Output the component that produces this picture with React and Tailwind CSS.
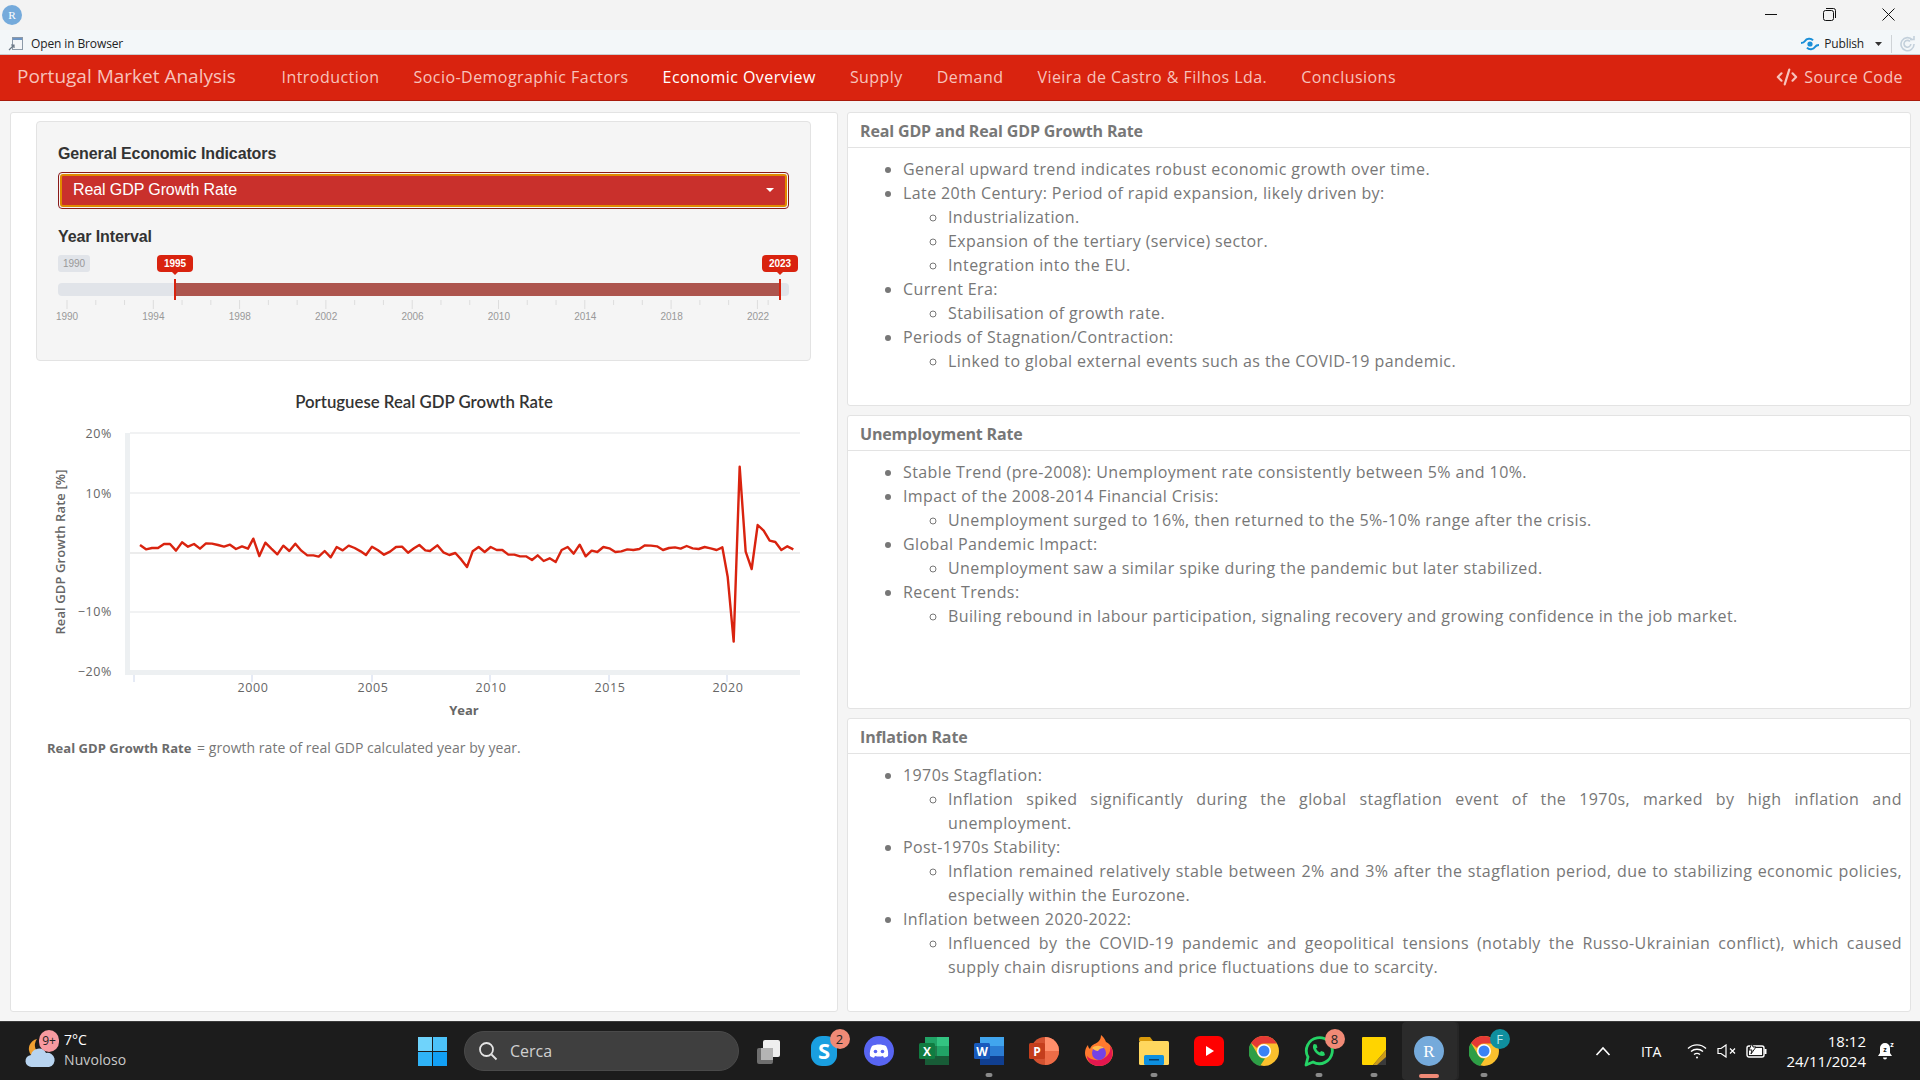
import { Code2 } from "lucide-react";

const openSans = "font-['Open_Sans',sans-serif]";
const arial = "font-['Liberation_Sans',Arial,sans-serif]";

const navLinks = [
  "Introduction",
  "Socio-Demographic Factors",
  "Economic Overview",
  "Supply",
  "Demand",
  "Vieira de Castro & Filhos Lda.",
  "Conclusions",
];

const cards = [
  {
    title: "Real GDP and Real GDP Growth Rate",
    items: [
      { text: "General upward trend indicates robust economic growth over time." },
      {
        text: "Late 20th Century: Period of rapid expansion, likely driven by:",
        sub: ["Industrialization.", "Expansion of the tertiary (service) sector.", "Integration into the EU."],
      },
      { text: "Current Era:", sub: ["Stabilisation of growth rate."] },
      {
        text: "Periods of Stagnation/Contraction:",
        sub: ["Linked to global external events such as the COVID-19 pandemic."],
      },
    ],
  },
  {
    title: "Unemployment Rate",
    items: [
      { text: "Stable Trend (pre-2008): Unemployment rate consistently between 5% and 10%." },
      {
        text: "Impact of the 2008-2014 Financial Crisis:",
        sub: ["Unemployment surged to 16%, then returned to the 5%-10% range after the crisis."],
      },
      {
        text: "Global Pandemic Impact:",
        sub: ["Unemployment saw a similar spike during the pandemic but later stabilized."],
      },
      {
        text: "Recent Trends:",
        sub: ["Builing rebound in labour participation, signaling recovery and growing confidence in the job market."],
      },
    ],
  },
  {
    title: "Inflation Rate",
    items: [
      {
        text: "1970s Stagflation:",
        sub: ["Inflation spiked significantly during the global stagflation event of the 1970s, marked by high inflation and unemployment."],
      },
      {
        text: "Post-1970s Stability:",
        sub: ["Inflation remained relatively stable between 2% and 3% after the stagflation period, due to stabilizing economic policies, especially within the Eurozone."],
      },
      {
        text: "Inflation between 2020-2022:",
        sub: ["Influenced by the COVID-19 pandemic and geopolitical tensions (notably the Russo-Ukrainian conflict), which caused supply chain disruptions and price fluctuations due to scarcity."],
      },
    ],
  },
];

// traced from the chart, in page pixels / 3
const lineA = [[330,495],[348,508],[366,504],[384,504],[402,492],[420,492],[438,512],[456,487],[474,500],[492,492],[510,506],[528,490],[546,491],[564,495],[582,500],[600,494],[618,507],[636,499],[654,506],[670,476],[688,528],[706,488],[724,506],[742,523],[760,497],[778,513],[796,491],[814,512],[832,526],[850,526],[866,530],[884,513],[902,532],[920,501],[938,511],[956,497],[974,504],[992,514],[1008,525],[1026,500],[1044,511],[1062,524],[1080,515],[1098,501],[1116,500],[1134,518],[1152,505],[1168,495],[1186,511]];
const lineB = [[0,393],[22,376],[40,397],[58,405],[76,399],[94,419],[111,441],[128,394],[146,381],[164,396],[182,381],[200,390],[217,390],[235,404],[253,404],[270,409],[288,409],[306,420],[323,406],[341,423],[359,415],[377,426],[395,390],[413,381],[431,401],[449,374],[467,409],[485,392],[502,396],[520,381],[538,385],[556,396],[574,394],[592,388],[610,390],[628,387],[645,376],[663,377],[681,379],[699,390],[717,384],[735,382],[752,386],[770,378],[788,385],[806,387],[824,381],[842,385],[860,390],[877,382],[893,470],[911,665],[929,140],[947,395],[965,447],[983,315],[1001,332],[1019,362],[1036,366],[1054,390],[1072,379],[1090,388]];
const linePoints = [
  ...lineA.map(([x, y]) => `${30 + x / 3},${380 + y / 3}`),
  ...lineB.map(([x, y]) => `${430 + x / 3},${420 + y / 3}`),
].join(" ");

function Card({ title, items, className }) {
  return (
    <section className={`bg-white border border-[#e3e3e3] rounded-[3px] overflow-hidden ${className}`}>
      <h3 className="h-[35px] pl-[12px] border-b border-[#e3e3e3] text-[16px] leading-[36px] tracking-[-0.15px] font-bold text-[#777777]">
        {title}
      </h3>
      <ul className="list-disc pl-[55px] pr-[8px] pt-[9px] text-[16px] leading-[24px] tracking-[0.395px] text-[#777777] marker:text-[#777777]">
        {items.map((item) => (
          <li key={item.text}>
            {item.text}
            {item.sub && (
              <ul className="list-[circle] pl-[45px] text-justify">
                {item.sub.map((s) => (
                  <li key={s}>{s}</li>
                ))}
              </ul>
            )}
          </li>
        ))}
      </ul>
    </section>
  );
}

function SliderBadge({ className, children }) {
  return (
    <span className={`absolute top-0 h-[17px] w-[36px] rounded-[4px] bg-[#d9230f] text-center text-[10px] font-bold leading-[17px] text-white ${className}`}>
      {children}
      <span className="absolute left-1/2 top-[17px] -translate-x-1/2 w-0 h-0 border-x-[3px] border-x-transparent border-t-[3px] border-t-[#d9230f]" />
    </span>
  );
}

function YearSlider() {
  const years = [1990, 1994, 1998, 2002, 2006, 2010, 2014, 2018, 2022];
  return (
    <div className={`relative h-[78px] ${arial}`}>
      <span className="absolute left-0 top-0 h-[17px] w-[32px] rounded-[3px] bg-[#e1e4e9] text-center text-[10px] leading-[17px] text-[#999999]">
        1990
      </span>
      <SliderBadge className="left-[99px]">1995</SliderBadge>
      <SliderBadge className="left-[704px]">2023</SliderBadge>
      <div className="absolute left-0 top-[28px] h-[13px] w-[731px] rounded-[4px] bg-[#e1e4e9]" />
      <div className="absolute left-[117px] top-[28px] h-[13px] w-[605px] bg-[#ad554e]" />
      <div className="absolute left-[116px] top-[24px] h-[21px] w-[2px] bg-[#d9230f]" />
      <div className="absolute left-[721px] top-[24px] h-[21px] w-[2px] bg-[#d9230f]" />
      <svg className="absolute left-0 top-[45px]" width="731" height="10">
        {years.flatMap((y, i) => [0, 1, 2].map((k) => {
          const x = 9 + i * 86.3 + k * 28.77;
          if (i === 8 && k > 0) return <line key={`${y}${k}`} x1={x - 20 + k * 2} x2={x - 20 + k * 2} y1="0" y2="5" stroke="#dddddd" />;
          return <line key={`${y}${k}`} x1={x} x2={x} y1="0" y2={k === 0 ? 9 : 5} stroke="#dddddd" />;
        }))}
      </svg>
      <div className="absolute left-[-6px] top-[56px] flex w-[721px] justify-between text-[10px] leading-[12px] text-[#999999]">
        {years.map((y) => (
          <span key={y} className="w-[30px] text-center">{y}</span>
        ))}
      </div>
    </div>
  );
}

function Chart() {
  const grid = [433, 493, 612];
  const yLabels = [[20, 438], [10, 498], [-10, 616], [-20, 676]];
  const xTicks = [[2000, 252], [2005, 372], [2010, 490], [2015, 609], [2020, 727]];
  return (
    <svg className={`block ${openSans}`} width="780" height="340" viewBox="36 385 780 340">
      <text x="424" y="408" textAnchor="middle" fontSize="16.8" fontWeight="600" fill="#333333" className="font-['Lato',sans-serif]">
        Portuguese Real GDP Growth Rate
      </text>
      {grid.map((y) => (
        <line key={y} x1="130" x2="800" y1={y} y2={y} stroke="#eceeef" strokeWidth="1.5" />
      ))}
      <line x1="130" x2="800" y1="553" y2="553" stroke="#e6e6e6" strokeWidth="1.5" />
      <rect x="125" y="433" width="5" height="242" fill="#edf0f2" />
      <rect x="125" y="670" width="675" height="5" fill="#edf0f2" />
      {[134, 252, 372, 490, 609, 727].map((x) => (
        <line key={x} x1={x} x2={x} y1="675" y2="682" stroke="#ccd6eb" />
      ))}
      {yLabels.map(([v, y]) => (
        <text key={v} x="112" y={y} textAnchor="end" fontSize="12.5" letterSpacing="0.6" fill="#666666">
          {v < 0 ? `−${-v}%` : `${v}%`}
        </text>
      ))}
      {xTicks.map(([v, x]) => (
        <text key={v} x={x + 1} y="692" textAnchor="middle" fontSize="12.5" letterSpacing="0.6" fill="#666666">
          {v}
        </text>
      ))}
      <text x="464" y="715" textAnchor="middle" fontSize="13" fontWeight="700" fill="#666666">Year</text>
      <text transform="translate(65 552) rotate(-90)" textAnchor="middle" fontSize="13" fontWeight="600" letterSpacing="0.1" fill="#666666">
        Real GDP Growth Rate [%]
      </text>
      <polyline points={linePoints} fill="none" stroke="#d9230f" strokeWidth="2.4" strokeLinejoin="round" />
    </svg>
  );
}

function RLogo({ size = 20 }) {
  return (
    <svg width={size} height={size} viewBox="0 0 30 30">
      <circle cx="15" cy="15" r="15" fill="#75aadb" />
      <text x="15" y="21" textAnchor="middle" fontSize="17" fill="#ffffff" fontFamily="Liberation Serif, serif">R</text>
    </svg>
  );
}

function TitleBar() {
  return (
    <div className="h-[30px] bg-[#f3f3f3] flex items-center justify-between pl-[2px]">
      <RLogo />
      <div className="flex items-center pb-[2px]">
        <div className="w-[58px] flex justify-center">
          <svg width="12" height="12" viewBox="0 0 12 12"><path d="M0 6.5h12" stroke="#111" /></svg>
        </div>
        <div className="w-[58px] flex justify-center">
          <svg width="13" height="13" viewBox="0 0 13 13" fill="none" stroke="#111">
            <rect x="0.5" y="2.5" width="10" height="10" rx="2" />
            <path d="M3 .5h7.5a2 2 0 0 1 2 2V10" />
          </svg>
        </div>
        <div className="w-[62px] flex justify-center pr-[2px]">
          <svg width="13" height="13" viewBox="0 0 13 13" stroke="#111"><path d="M.5.5l12 12M12.5.5l-12 12" /></svg>
        </div>
      </div>
    </div>
  );
}

function ToolBar() {
  return (
    <div className={`h-[25px] pt-[3px] bg-[#f3f7f9] border-b border-[#c9cccf] flex items-center justify-between pl-[8px] pr-[4px] text-[12px] text-[#222222] ${openSans}`}>
      <div className="flex items-center gap-[7px]">
        <svg width="16" height="16" viewBox="0 0 16 16">
          <rect x="4.5" y="1.5" width="10" height="12" fill="#f4f6f8" stroke="#8d9aa8" />
          <path d="M5 2h9v2H5z" fill="#6d95c4" />
          <path d="M1 14l5-5M3 9h3v3" fill="none" stroke="#6a7785" strokeWidth="1.2" />
        </svg>
        <span className="tracking-[-0.12px]">Open in Browser</span>
      </div>
      <div className="flex items-center">
        <svg width="20" height="16" viewBox="0 0 20 16" fill="none">
          <circle cx="10" cy="8" r="2.6" fill="#1a8fd8" />
          <path d="M1 7c2 0 3-.3 4-2 1.5-2.6 6-3 8 -.6 M19 9c-2 0-3 .3-4 2-1.5 2.6-6 3-8 .6" stroke="#1a8fd8" strokeWidth="2" />
        </svg>
        <span className="ml-[4px] tracking-[-0.2px]">Publish</span>
        <svg className="ml-[11px]" width="7" height="4" viewBox="0 0 7 4"><path d="M0 0h7L3.5 4z" fill="#333" /></svg>
        <div className="ml-[9px] h-[18px] w-px bg-[#cfd3d6]" />
        <svg className="ml-[7px]" width="17" height="17" viewBox="0 0 17 17" fill="none" stroke="#c3d0db" strokeWidth="1.6">
          <path d="M13.5 5a6.5 6.5 0 1 0 1.5 4" />
          <path d="M11 4.5h4v-3.5" />
          <path d="M11 6.6a3.4 3.4 0 1 0 .8 2.4" />
        </svg>
      </div>
    </div>
  );
}

function Navbar() {
  return (
    <nav className={`h-[46px] pb-[2px] bg-[#d9230f] border-b border-[#a91b0c] flex items-center justify-between pl-[17px] pr-[17px] text-[16px] tracking-[0.45px] text-[#f7c2bb] ${openSans}`}>
      <div className="flex items-center">
        <span className="text-[19px] tracking-normal w-[247.5px]">Portugal Market Analysis</span>
        {navLinks.map((l) => (
          <a key={l} className={`px-[17px] ${l === "Economic Overview" ? "text-white" : ""}`}>{l}</a>
        ))}
      </div>
      <div className="flex items-center gap-[6px]">
        <Code2 size={22} strokeWidth={2.4} />
        <span className="tracking-[0.42px]">Source Code</span>
      </div>
    </nav>
  );
}

function LeftPanel() {
  return (
    <div className="w-[828px] bg-white border border-[#e3e3e3] rounded-[3px] pl-[25px] pt-[8px]">
      <div className={`w-[775px] h-[240px] bg-[#f5f5f5] border border-[#e3e3e3] rounded-[4px] pl-[21px] pt-[22px] ${arial}`}>
        <label className="block text-[16px] leading-[20px] tracking-[-0.12px] font-bold text-[#333333]">General Economic Indicators</label>
        <div className="mt-[8px] w-[731px] h-[37px] rounded-[4px] border border-[#8a1a1a] p-px">
          <div className="h-full rounded-[3px] border-2 border-[#e08a00] bg-[#c9302c] flex items-center justify-between pl-[11px] pr-[11px] pb-[2px] text-[16px] tracking-[-0.1px] text-white">
            <span>Real GDP Growth Rate</span>
            <span className="w-0 h-0 border-x-[4px] border-x-transparent border-t-[4px] border-t-white" />
          </div>
        </div>
        <label className="block mt-[18px] text-[16px] leading-[20px] tracking-[-0.1px] font-bold text-[#333333]">Year Interval</label>
        <div className="mt-[8px]">
          <YearSlider />
        </div>
      </div>
      <div className="mt-[24px]">
        <Chart />
      </div>
      <p className={`mt-[11px] pl-[11px] text-[14px] leading-[24px] tracking-[0.03px] text-[#777777] ${openSans}`}>
        <b className="mr-[2px] text-[13px] font-bold text-[#6b6b6b]">Real GDP Growth Rate</b> = growth rate of real GDP calculated year by year.
      </p>
    </div>
  );
}

function Dot({ active }) {
  return active ? (
    <span className="absolute left-1/2 -translate-x-1/2 bottom-[2px] h-[4px] w-[20px] rounded bg-[#f08a76]" />
  ) : (
    <span className="absolute left-1/2 -translate-x-1/2 bottom-[3px] h-[4px] w-[7px] rounded bg-[#8a8a8a]" />
  );
}

function Badge({ children, color = "bg-[#f08a76]", textColor = "text-[#222222]" }) {
  return (
    <span className={`absolute right-[2px] top-[7px] w-[20px] h-[20px] rounded-full ${color} ${textColor} text-center text-[13px] leading-[20px] ${openSans}`}>
      {children}
    </span>
  );
}

const taskIcons = [
  {
    id: "task",
    svg: (
      <svg width="28" height="28" viewBox="0 0 28 28">
        <rect x="2" y="11" width="16" height="16" rx="2" fill="#6e6e6e" />
        <rect x="8" y="3" width="17" height="17" rx="2" fill="#efefef" />
        <rect x="6" y="11" width="12" height="12" fill="#b4b4b4" />
      </svg>
    ),
  },
  {
    id: "skype",
    badge: "2",
    svg: (
      <svg width="30" height="34" viewBox="0 0 30 34">
        <rect x="2" y="2" width="26" height="30" rx="11" fill="#1a9fe0" />
        <text x="15" y="25" textAnchor="middle" fontSize="22" fontWeight="700" fill="#fff" fontFamily="Open Sans, sans-serif">S</text>
      </svg>
    ),
  },
  {
    id: "discord",
    svg: (
      <svg width="30" height="30" viewBox="0 0 30 30">
        <circle cx="15" cy="15" r="15" fill="#5865f2" />
        <path d="M8 10c4-2 10-2 14 0 2 3 2.500 7 2 10-1.500 1-3 1.600-4 1.800l-1-1.800c-3 .8-5 .8-8 0l-1 1.800c-1-.2-2.500-.8-4-1.800-.5-3 0-7 2-10z" fill="#fff" />
        <circle cx="11.500" cy="15.500" r="1.800" fill="#5865f2" />
        <circle cx="18.500" cy="15.500" r="1.800" fill="#5865f2" />
      </svg>
    ),
  },
  {
    id: "excel",
    svg: (
      <svg width="30" height="28" viewBox="0 0 30 28">
        <rect x="6" y="0" width="24" height="28" rx="2" fill="#1f7a4a" />
        <rect x="18" y="0" width="12" height="9" fill="#33c481" />
        <rect x="18" y="9" width="12" height="10" fill="#21a366" />
        <rect x="6" y="0" width="12" height="9" fill="#21a366" />
        <rect x="6" y="19" width="24" height="9" fill="#185c37" />
        <rect x="0" y="6" width="16" height="16" rx="1.500" fill="#107c41" />
        <text x="8" y="19" textAnchor="middle" fontSize="12" fontWeight="700" fill="#fff" fontFamily="Open Sans, sans-serif">X</text>
      </svg>
    ),
  },
  {
    id: "word",
    dot: true,
    svg: (
      <svg width="30" height="28" viewBox="0 0 30 28">
        <rect x="6" y="0" width="24" height="28" rx="2" fill="#2b7cd3" />
        <rect x="6" y="0" width="24" height="9" fill="#41a5ee" />
        <rect x="6" y="19" width="24" height="9" fill="#103f91" />
        <rect x="0" y="6" width="16" height="16" rx="1.500" fill="#185abd" />
        <text x="8" y="19" textAnchor="middle" fontSize="12" fontWeight="700" fill="#fff" fontFamily="Open Sans, sans-serif">W</text>
      </svg>
    ),
  },
  {
    id: "ppt",
    svg: (
      <svg width="30" height="30" viewBox="0 0 30 30">
        <circle cx="16" cy="15" r="14" fill="#d35230" />
        <path d="M16 1a14 14 0 0 1 14 14H16z" fill="#ff8f6b" />
        <path d="M16 15h14a14 14 0 0 1-14 14z" fill="#ed6c47" />
        <rect x="0" y="7" width="16" height="16" rx="1.500" fill="#c43e1c" />
        <text x="8" y="20" textAnchor="middle" fontSize="12" fontWeight="700" fill="#fff" fontFamily="Open Sans, sans-serif">P</text>
      </svg>
    ),
  },
  {
    id: "firefox",
    svg: (
      <svg width="30" height="32" viewBox="0 0 30 32">
        <path d="M15 31C6 31 1 24 1 18c0-3 1-6 3-8 0 2 1 3 2 4 1-4 5-5 8-7 2-2 3-4 3-7 3 2 4 5 5 7 4 2 7 6 7 11 0 7-6 13-14 13z" fill="#ff7a2f" />
        <path d="M15 31C8 31 3 26 3 21c4 5 14 6 20 0 3-3 4-7 3-10 3 3 3 8 2 11-2 6-7 9-13 9z" fill="#e3174f" />
        <circle cx="15" cy="18" r="7" fill="#7542e5" />
        <path d="M8 13c3-3 9-3 12 0-3 0-5 1-6 3-2 0-4-1-6-3z" fill="#ffbd4f" />
      </svg>
    ),
  },
  {
    id: "files",
    dot: true,
    svg: (
      <svg width="30" height="28" viewBox="0 0 30 28">
        <path d="M0 2a2 2 0 0 1 2-2h9l3 4H0z" fill="#d99a0b" />
        <rect x="0" y="4" width="30" height="24" rx="1.500" fill="#ffd75e" />
        <rect x="5" y="18" width="20" height="10" rx="1.500" fill="#0d8fe0" />
        <rect x="10" y="22" width="10" height="1.500" fill="#063f6b" />
      </svg>
    ),
  },
  {
    id: "yt",
    svg: (
      <svg width="30" height="30" viewBox="0 0 30 30">
        <rect x="0" y="0" width="30" height="30" rx="6" fill="#f00" />
        <path d="M12 10l8 5-8 5z" fill="#fff" />
      </svg>
    ),
  },
  { id: "chrome", svg: <Chrome /> },
  {
    id: "wa",
    dot: true,
    badge: "8",
    svg: (
      <svg width="30" height="32" viewBox="0 0 30 32" fill="none">
        <path d="M2 30l2-8A13 13 0 1 1 9 27z" stroke="#25d366" strokeWidth="2.800" strokeLinejoin="round" />
        <path d="M10 9c-2 2-1 6 2 9s7 4 9 2l-1-3-3-1-1 1.500c-2-1-3-2-4-4l1.500-1-1-3z" fill="#25d366" />
      </svg>
    ),
  },
  {
    id: "notes",
    dot: true,
    svg: (
      <svg width="26" height="30" viewBox="0 0 26 30">
        <path d="M1 2a1 1 0 0 1 1-1h22a1 1 0 0 1 1 1v18l-9 9H2a1 1 0 0 1-1-1z" fill="#ffd400" />
        <path d="M25 14v15H12z" fill="#3a3a3a" />
        <path d="M25 14v7l-9 8h-4z" fill="#c99a1c" />
      </svg>
    ),
  },
  { id: "r", active: true, svg: <RLogo size={30} /> },
  {
    id: "chrome2",
    dot: true,
    badge: "F",
    badgeColor: "bg-[#0f8f9e]",
    badgeText: "text-[#bfe6ea]",
    svg: <Chrome />,
  },
];

function Chrome() {
  return (
    <svg width="30" height="30" viewBox="0 0 30 30">
      <circle cx="15" cy="15" r="15" fill="#fbc02d" />
      <path d="M15 0a15 15 0 0 1 13 7.500H15a7.500 7.500 0 0 0-7 4.500L2 7A15 15 0 0 1 15 0z" fill="#e53935" />
      <path d="M2 7l6.500 11a7.500 7.500 0 0 0 7.500 4.500L11 30A15 15 0 0 1 2 7z" fill="#2e9e46" />
      <circle cx="15" cy="15" r="7" fill="#fff" />
      <circle cx="15" cy="15" r="5.500" fill="#3b82f6" />
    </svg>
  );
}

function Taskbar() {
  return (
    <footer className={`h-[59px] bg-[#1c1c1c] border-t border-[#3a3a3a] flex items-center text-white ${openSans}`}>
      <div className="w-[418px] pl-[25px] flex items-center shrink-0">
        <div className="relative w-[39px] h-[44px]">
          <svg className="absolute left-0 top-[8px]" width="32" height="32" viewBox="0 0 32 32">
            <path d="M12 2a10 10 0 0 0 6 16H6A10 10 0 0 1 12 2z" fill="#f0a030" />
            <path d="M7 30a6 6 0 0 1-1-12 8 8 0 0 1 15-2 7 7 0 0 1 3 14z" fill="#b8d4f0" />
          </svg>
          <span className="absolute left-[14px] top-[1px] w-[20px] h-[22px] rounded-full bg-[#f79aa0] text-center text-[12px] leading-[22px] text-[#222222]">9+</span>
        </div>
        <div className="leading-[20px] text-[14px] pb-[2px]">
          <div>7°C</div>
          <div className="text-[#c9c9c9] tracking-[0.1px]">Nuvoloso</div>
        </div>
      </div>
      <div className="w-[46px] shrink-0">
        <svg width="29" height="29" viewBox="0 0 29 29">
          <rect x="0" y="0" width="14" height="14" fill="#6fd3fb" />
          <rect x="15" y="0" width="14" height="14" fill="#4cc2f9" />
          <rect x="0" y="15" width="14" height="14" fill="#2fb3f7" />
          <rect x="15" y="15" width="14" height="14" fill="#12a0f5" />
        </svg>
      </div>
      <div className="w-[275px] h-[40px] rounded-full bg-[#3f3f3f] border border-[#4a4a4a] flex items-center pl-[13px] gap-[12px] shrink-0 text-[16px] text-[#d0d0d0]">
        <svg width="20" height="20" viewBox="0 0 20 20" fill="none" stroke="#e4e4e4" strokeWidth="1.800">
          <circle cx="8.500" cy="8.500" r="6.500" />
          <path d="M13.500 13.500l5 5" />
        </svg>
        <span>Cerca</span>
      </div>
      <div className="flex ml-[2.500px] h-full">
        {taskIcons.map((t) => (
          <div key={t.id} className={`relative w-[55px] h-full flex items-center justify-center ${t.active ? "rounded-[4px] bg-[#2b2b2b] shadow-[2px_0_0_#262626]" : ""}`}>
            {t.svg}
            {t.badge && <Badge color={t.badgeColor} textColor={t.badgeText}>{t.badge}</Badge>}
            {t.dot && <Dot />}
            {t.active && <Dot active />}
          </div>
        ))}
      </div>
      <div className="flex-1 flex items-center justify-end pr-[25px] text-[14px]">
        <svg width="16" height="10" viewBox="0 0 16 10" fill="none" stroke="#fff" strokeWidth="1.600" className="mr-[30px]">
          <path d="M1.500 9L8 2l6.500 7" />
        </svg>
        <span className="mr-[26px]">ITA</span>
        <svg width="20" height="16" viewBox="0 0 20 16" fill="none" stroke="#fff" strokeWidth="1.400" className="mr-[10px]">
          <path d="M1 5.500a13 13 0 0 1 18 0M4 8.500a9 9 0 0 1 12 0M7 11.500a5 5 0 0 1 6 0" />
          <circle cx="10" cy="14.500" r="1" fill="#fff" stroke="none" />
        </svg>
        <svg width="20" height="14" viewBox="0 0 20 14" fill="none" stroke="#fff" strokeWidth="1.200" className="mr-[9px]">
          <path d="M1 4.500h3l5-3.500v12l-5-3.500H1z" />
          <path d="M13 4.500l5 5M18 4.500l-5 5" />
        </svg>
        <svg width="21" height="16" viewBox="0 0 21 16" className="mr-[19px]">
          <rect x="1" y="3" width="17" height="11" rx="2" fill="none" stroke="#fff" strokeWidth="1.400" />
          <rect x="3" y="5" width="13" height="7" fill="#fff" />
          <rect x="18.500" y="6" width="2" height="5" fill="#fff" />
          <path d="M6 0L3 7h3l-1 4 5-7H7z" fill="#fff" stroke="#1c1c1c" />
        </svg>
        <div className="text-right leading-[20px] text-[15px]">
          <div>18:12</div>
          <div>24/11/2024</div>
        </div>
        <svg width="18" height="20" viewBox="0 0 18 20" className="ml-[11px]">
          <path d="M8 2a5 5 0 0 0-5 5v5l-2 3h14l-2-3V7a5 5 0 0 0-5-5z" fill="#fff" />
          <path d="M6 16.500a2 2 0 0 0 4 0" fill="#fff" />
          <text x="8" y="11" textAnchor="middle" fontSize="7" fontWeight="700" fill="#1c1c1c" fontFamily="Open Sans, sans-serif">z</text>
          <text x="15" y="6" textAnchor="middle" fontSize="7" fontWeight="700" fill="#fff" fontFamily="Open Sans, sans-serif">z</text>
        </svg>
      </div>
    </footer>
  );
}

export default function App() {
  return (
    <div className={`w-[1920px] h-[1080px] overflow-hidden flex flex-col bg-[#f5f5f5] ${openSans}`}>
      <TitleBar />
      <ToolBar />
      <Navbar />
      <main className="flex-1 min-h-0 flex gap-[9px] pt-[11px] pb-[9px] pl-[10px] pr-[9px]">
        <LeftPanel />
        <div className="flex-1 flex flex-col gap-[9px] min-w-0">
          {cards.map((c) => (
            <Card key={c.title} {...c} className="flex-1" />
          ))}
        </div>
      </main>
      <Taskbar />
    </div>
  );
}
